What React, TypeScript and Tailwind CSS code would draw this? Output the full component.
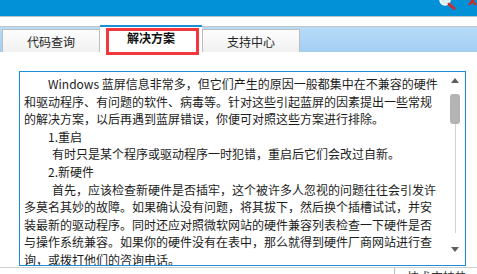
import React from 'react';

const font = { fontFamily: '"Noto Sans CJK SC", "Noto Sans", sans-serif' };

function Tab({ label, active = false }: { label: string; active?: boolean }) {
  if (active) {
    return (
      <div className="relative flex h-[27px] w-[102px] items-center justify-center border-t-2 border-[#1b8fd6] bg-white text-[12px] font-bold text-[#111]">
        <span className="-mt-[3px]">{label}</span>
      </div>
    );
  }
  return (
    <div className="flex h-[23px] w-[98px] items-center justify-center border border-b-0 border-[#bdbdbd] bg-gradient-to-b from-[#fdfdfd] to-[#f1f1f1] text-[12px] text-[#222]">
      <span className="mt-[1px]">{label}</span>
    </div>
  );
}

export default function App() {
  return (
    <div className="flex h-[274px] w-[477px] flex-col overflow-hidden bg-white" style={font}>
      {/* title bar */}
      <div className="relative h-[16px] shrink-0 bg-[#0291d6]">
        <svg className="absolute left-[438px] top-[-5px]" width="20" height="16" viewBox="0 0 20 16">
          <circle cx="7" cy="5" r="5" fill="#dbeefa" stroke="#ffffff" strokeWidth="1.5" />
          <line x1="11" y1="9" x2="16" y2="13.5" stroke="#d8262a" strokeWidth="3" strokeLinecap="round" />
        </svg>
        <svg className="absolute left-[468px] top-[-4px]" width="10" height="11" viewBox="0 0 10 11">
          <path d="M1 1 L8 9 M8 1 L1 9" stroke="#d42a20" strokeWidth="2.2" />
        </svg>
      </div>
      <div className="h-px shrink-0 bg-[#b8c4cc]" />
      <div className="h-[9px] shrink-0 bg-white" />

      {/* tab bar */}
      <div className="relative flex h-[26px] shrink-0 items-end border-t border-[#c4c4c4] bg-gradient-to-b from-[#b7dbf8] to-[#a3cef2] pl-[2px]">
        <Tab label="代码查询" />
        <Tab label="解决方案" active />
        <Tab label="支持中心" />
        <div className="pointer-events-none absolute left-[106px] top-[1px] h-[27px] w-[93px] border-[3px] border-[#f2383c]" />
      </div>

      <div className="h-[19px] shrink-0 bg-white" />

      {/* content box */}
      <div className="ml-[19px] flex h-[195px] w-[447px] shrink-0 overflow-hidden border border-[#1b8fd6]">
        <div className="w-[423px] shrink-0 pl-[4px] pt-[3px] text-[12px] leading-[17.6px] text-[#1c1c1c]">
          <p className="indent-[24px]">Windows 蓝屏信息非常多，但它们产生的原因一般都集中在不兼容的硬件和驱动程序、有问题的软件、病毒等。针对这些引起蓝屏的因素提出一些常规的解决方案，以后再遇到蓝屏错误，你便可对照这些方案进行排除。</p>
          <p className="indent-[24px]">1.重启</p>
          <p className="indent-[28px]">有时只是某个程序或驱动程序一时犯错，重启后它们会改过自新。</p>
          <p className="indent-[24px]">2.新硬件</p>
          <p className="indent-[28px]">首先，应该检查新硬件是否插牢，这个被许多人忽视的问题往往会引发许多莫名其妙的故障。如果确认没有问题，将其拔下，然后换个插槽试试，并安装最新的驱动程序。同时还应对照微软网站的硬件兼容列表检查一下硬件是否与操作系统兼容。如果你的硬件没有在表中，那么就得到硬件厂商网站进行查询，或拨打他们的咨询电话。</p>
        </div>
        {/* scrollbar */}
        <div className="flex w-[22px] shrink-0 flex-col pl-[7px] pt-[6px]">
          <div className="flex h-[5px] w-[10px] justify-center">
            <div className="h-0 w-0 border-x-[4px] border-b-[5px] border-x-transparent border-b-[#5e5e5e]" />
          </div>
          <div className="mt-[11px] h-[30px] w-[10px] rounded-[3px] bg-[#b4b4b4]" />
          <div className="flex h-[109px] w-[10px] justify-center">
            <div className="h-full w-px bg-[#d2d2d2]" />
          </div>
          <div className="mt-[14px] flex h-[5px] w-[10px] justify-center">
            <div className="h-0 w-0 border-x-[4px] border-t-[5px] border-x-transparent border-t-[#5e5e5e]" />
          </div>
        </div>
      </div>

      <div className="h-[1px] shrink-0" />
      <div className="h-px shrink-0 bg-[#cfcfcf]" />
      <div className="flex h-[6px] shrink-0 bg-white">
        <div className="w-[394px] shrink-0" />
        <div className="h-full w-px bg-[#bdbdbd]" />
        <div className="pl-[12px] pt-[2px] text-[12px] leading-[14px] text-[#333]">技术支持热线</div>
      </div>
    </div>
  );
}
